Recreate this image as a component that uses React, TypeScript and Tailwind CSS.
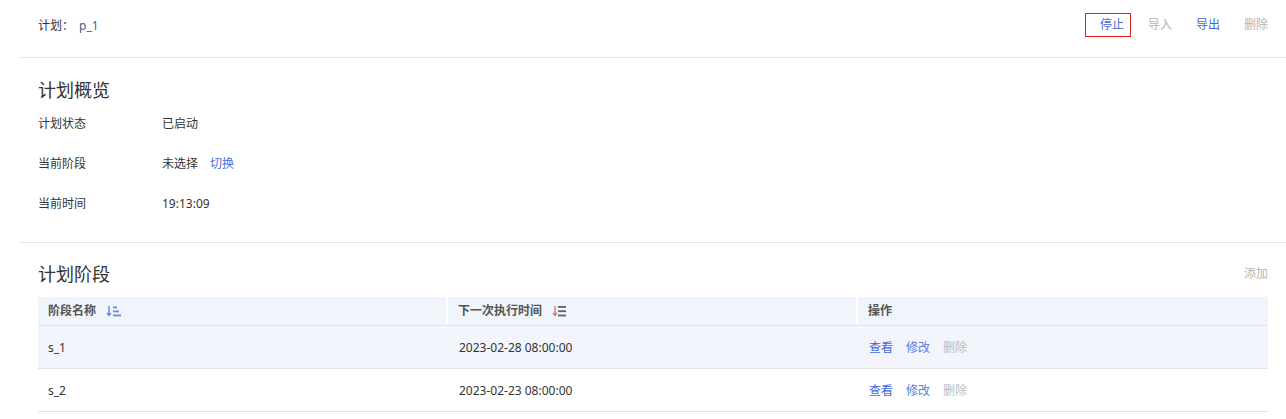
import React from 'react';

const font = { fontFamily: '"Noto Sans", "Noto Sans CJK SC", sans-serif' };

function SortIcon({ active }: { active?: boolean }) {
    const c = active ? '#6f86e0' : '#8a8f99';
    return (
        <svg width="16" height="12" viewBox="0 0 16 12" className="ml-[10px]">
            <path d="M3 1v9M1 8l2 2.5L5 8" stroke={active ? '#6f86e0' : '#c9826b'} strokeWidth="1.4" fill="none" />
            {active ? (
                <g fill={c}>
                    <rect x="7" y="1.5" width="4" height="1.8" />
                    <rect x="7" y="5.5" width="6" height="1.8" />
                    <rect x="7" y="9.5" width="8" height="1.8" />
                </g>
            ) : (
                <g fill="#5a6170">
                    <rect x="6" y="1" width="8" height="1.8" />
                    <rect x="6" y="5.3" width="8" height="1.8" />
                    <rect x="6" y="9.6" width="8" height="1.8" />
                </g>
            )}
        </svg>
    );
}

const rows = [
    { name: 's_1', time: '2023-02-28 08:00:00', hover: true },
    { name: 's_2', time: '2023-02-23 08:00:00', hover: false },
];

export default function App() {
    return (
        <div className="bg-white w-[1286px] h-[419px] overflow-hidden text-[12px] text-[#333]" style={font}>
            {/* Header */}
            <div className="ml-[19px] h-[58px] border-b border-[#e4e4e4] pl-[19px] pr-[18px] flex items-start justify-between">
                <div className="flex items-center h-[24px] mt-[14px]">
                    <span>计划：</span>
                    <span className="ml-[5px] text-[#4a5a8a]">p_1</span>
                </div>
                <div className="flex items-center mt-[13px] text-[12px]">
                    <button className="h-[24px] w-[46px] border border-[#e0201c] pl-[14px] text-left text-[#4466dd]">停止</button>
                    <span className="ml-[17px] text-[#b5b5b5]">导入</span>
                    <span className="ml-[24px] text-[#4466dd]">导出</span>
                    <span className="ml-[24px] text-[#b5b5b5]">删除</span>
                </div>
            </div>

            {/* Overview */}
            <div className="ml-[19px] pl-[19px] pt-[20px] pb-[18px] border-b border-[#e4e4e4]">
                <div className="text-[18px] leading-[24px] text-[#333] mb-[2px]">计划概览</div>
                <div className="flex items-center h-[40px]">
                    <span className="w-[124px]">计划状态</span>
                    <span>已启动</span>
                </div>
                <div className="flex items-center h-[40px]">
                    <span className="w-[124px]">当前阶段</span>
                    <span>未选择</span>
                    <span className="ml-[12px] text-[#4a6ed8]">切换</span>
                </div>
                <div className="flex items-center h-[40px]">
                    <span className="w-[124px]">当前时间</span>
                    <span>19:13:09</span>
                </div>
            </div>

            {/* Stages */}
            <div className="ml-[19px] pl-[19px] pr-[18px] pt-[19px]">
                <div className="flex items-center justify-between h-[24px]">
                    <span className="text-[18px] leading-[24px]">计划阶段</span>
                    <span className="text-[#b5b5b5]">添加</span>
                </div>
                <div className="mt-[11px]">
                    <div className="grid grid-cols-3 h-[29px] bg-[#f0f4fb] border-b border-[#dfe2e8] font-semibold text-[#555]">
                        <div className="flex items-center pl-[10px] border-r-2 border-white">
                            阶段名称
                            <SortIcon active />
                        </div>
                        <div className="flex items-center pl-[10px] border-r-2 border-white">
                            下一次执行时间
                            <SortIcon />
                        </div>
                        <div className="flex items-center pl-[10px]">操作</div>
                    </div>
                    {rows.map((r) => (
                        <div
                            key={r.name}
                            className={`grid grid-cols-3 h-[43px] pt-[2px] border-b border-[#dfe2e8] ${r.hover ? 'bg-[#f2f5fc]' : 'bg-white'}`}
                        >
                            <div className="flex items-center pl-[10px]">{r.name}</div>
                            <div className="flex items-center pl-[11px]">{r.time}</div>
                            <div className="flex items-center pl-[11px]">
                                <span className="text-[#4466dd]">查看</span>
                                <span className="ml-[13px] text-[#5a7be0]">修改</span>
                                <span className="ml-[13px] text-[#bbb]">删除</span>
                            </div>
                        </div>
                    ))}
                </div>
            </div>
        </div>
    );
}
